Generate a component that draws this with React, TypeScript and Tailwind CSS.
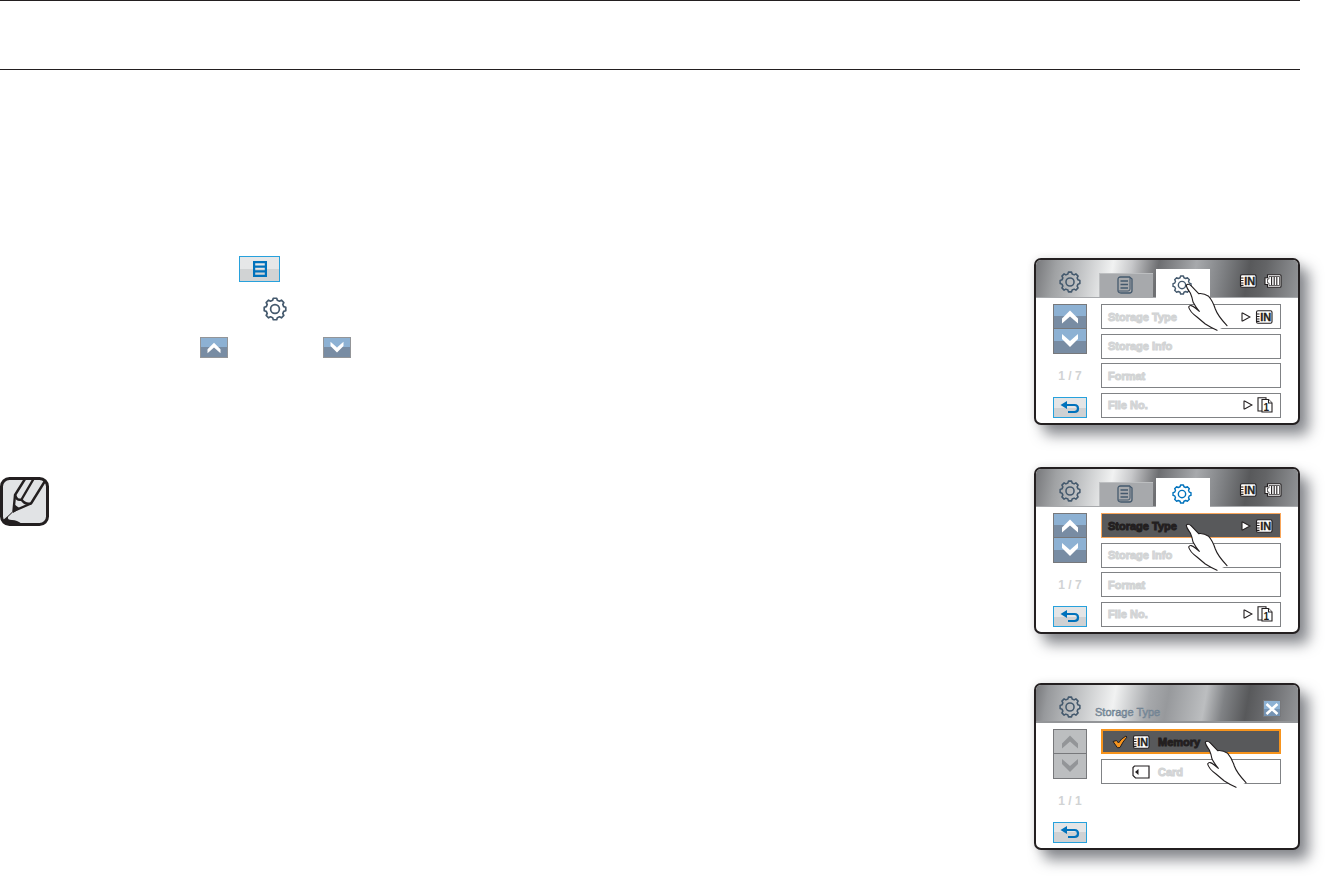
import React from "react";

const INK = "#231f20";
const SLATE = "#44596d";
const BLUE = "#0072bc";

function gearPath(cx: number, cy: number, outer: number, inner: number) {
  const points: string[] = [];
  for (let tooth = 0; tooth < 8; tooth++) {
    const base = tooth * 45;
    const corners: [number, number][] = [
      [-15, inner],
      [-9, outer],
      [9, outer],
      [15, inner],
    ];
    for (const [offset, radius] of corners) {
      const angle = ((base + offset) * Math.PI) / 180;
      points.push(
        `${(cx + radius * Math.sin(angle)).toFixed(2)} ${(cy - radius * Math.cos(angle)).toFixed(2)}`
      );
    }
  }
  return `M${points.join("L")}Z`;
}

const GEAR = gearPath(12, 12, 10.9, 9);

function Gear({ color, className }: { color: string; className: string }) {
  return (
    <svg viewBox="0 0 24 24" className={className} fill="none" stroke={color} strokeWidth="1.7" strokeLinejoin="round" aria-hidden="true">
      <path d={GEAR} />
      <circle cx="12" cy="12" r="4.4" />
    </svg>
  );
}

function ListIcon() {
  return (
    <svg viewBox="0 0 16 18" className="h-[18px] w-4" fill="none" stroke={SLATE} aria-hidden="true">
      <path d="M3.5 1H12.5L15 3V14.5Q15 17 12.5 17H4Q1 17 1 14.5V3.5Q1 1 3.5 1Z" strokeWidth="1.3" />
      <path d="M13 1.5V13Q13 15 11 15H1.5" strokeWidth="1" />
      <path d="M3.5 5H11M3.5 8.5H11M3.5 12H11" strokeWidth="1.5" />
    </svg>
  );
}

function MemoryIcon() {
  return (
    <svg viewBox="0 0 18 14" className="h-[14px] w-[18px] shrink-0" aria-hidden="true">
      <path d="M3 .8H15.5Q17 .8 17 2.3V11.7Q17 13.2 15.5 13.2H3Q1.5 13.2 1.5 11.7V2.3Q1.5 .8 3 .8Z" fill="#fff" stroke={INK} strokeWidth="1.1" />
      <path d="M1 4H4.5M1 6.5H4.5M1 9H4.5M1 11.3H4.5" stroke={INK} strokeWidth="1.2" />
      <text x="5.2" y="10.9" fontFamily="Liberation Sans, sans-serif" fontWeight="700" fontSize="11" fill={INK} stroke={INK} strokeWidth=".3">
        IN
      </text>
    </svg>
  );
}

function BatteryIcon() {
  return (
    <svg viewBox="0 0 18 14" className="h-[14px] w-[18px] shrink-0" aria-hidden="true">
      <path d="M3.5 .8H16Q17 .8 17 1.8V12.2Q17 13.2 16 13.2H3.500V10.500H1V3.800H3.500Z" fill="#fff" stroke={INK} strokeWidth="1.1" />
      <path d="M5 2.500H15.500V11.500H5V9H3.500V5H5Z" fill="none" stroke={INK} strokeWidth=".7" />
      <path d="M7.600 3V11M10.200 3V11M12.800 3V11" stroke={INK} strokeWidth="1.1" />
    </svg>
  );
}

function FilesIcon() {
  return (
    <svg viewBox="0 0 16 16" className="h-4 w-4 shrink-0" fill="#fff" stroke={INK} strokeWidth="1.1" aria-hidden="true">
      <path d="M5 14H1V.8H9V2.5" />
      <path d="M5 2.5H11.5L15 6V15H5Z" />
      <path d="M11.5 2.5V6H15" />
      <text x="6.500" y="13.500" fontFamily="Liberation Sans, sans-serif" fontWeight="700" fontSize="10" fill={INK} stroke="none">
        1
      </text>
    </svg>
  );
}

function CardIcon() {
  return (
    <svg viewBox="0 0 18 14" className="h-[14px] w-[18px] shrink-0" fill="#fff" stroke={INK} strokeWidth="1.2" aria-hidden="true">
      <path d="M2.5 1H17V13H3.5L1 10.5V2.5Z" />
      <path d="M6.500 4V10L3 7Z" fill={INK} stroke="none" />
    </svg>
  );
}

function Pointer() {
  return (
    <svg viewBox="0 0 10 10" className="h-[10px] w-[10px] shrink-0" aria-hidden="true">
      <path d="M1 1.3Q1 .8 1.6 1L9 5L1.6 9Q1 9.2 1 8.7Z" fill="#fff" stroke={INK} strokeWidth="1.1" />
    </svg>
  );
}

function Tick() {
  return (
    <svg viewBox="0 0 16 14" className="h-[14px] w-4 shrink-0" aria-hidden="true">
      <path d="M1 6.500L4.500 5.500L6.500 8Q9 3.500 14 1L15 2Q10.500 7 8 12.500L5.500 12.800Z" fill="#f7941d" stroke={INK} strokeWidth="1" strokeLinejoin="round" />
    </svg>
  );
}

function Chevron({ down, color = "#fff" }: { down?: boolean; color?: string }) {
  return (
    <svg viewBox="0 0 32 23" className="h-full w-full" fill={color} aria-hidden="true">
      <path d={down ? "M8 4.500L16 11.500L24 4.500V9.500L16 17.500L8 9.500Z" : "M8 13.500L16 5.500L24 13.500V18.500L16 11.500L8 18.500Z"} />
    </svg>
  );
}

function Hand() {
  return (
    <svg viewBox="0 0 132 144" className="h-12 w-11" aria-hidden="true">
      <path
        d="M4 7Q8 0 18 8L41 32Q56 30 71 40Q83 53 91 78Q98 98 126 128L96 142Q75 132 61 123L36 102Q14 86 11 72Q16 62 31 75L43 85Q32 72 24 57Q22 44 16 30Q5 15 4 7Z"
        fill="#fff"
      />
      <path
        d="M126 128Q98 98 91 78Q83 53 71 40Q56 30 41 32L18 8Q8 0 4 7Q5 15 16 30Q22 44 24 57Q32 72 43 85L31 75Q16 62 11 72Q14 86 36 102L61 123Q75 132 96 142"
        fill="none"
        stroke={INK}
        strokeWidth="3.4"
        strokeLinejoin="round"
        strokeLinecap="round"
      />
    </svg>
  );
}

function BackButton() {
  return (
    <button
      type="button"
      aria-label="Back"
      className="flex h-[21px] w-full items-center justify-center border border-[#27a1dc] bg-linear-to-b from-[#e4e5e6] from-50% to-[#cfd1d3] to-50%"
    >
      <svg viewBox="0 0 20 13" className="h-[13px] w-5" fill="none" aria-hidden="true">
        <path d="M6 4H14.500Q18 4 18 7.500Q18 11 14.500 11H8" stroke={BLUE} strokeWidth="2.200" />
        <path d="M.5 4L7 0V8Z" fill={BLUE} />
      </svg>
    </button>
  );
}

function Pager({ page, disabled }: { page: string; disabled?: boolean }) {
  const tone = disabled
    ? "border-[#77787b] bg-[#bcbec0]"
    : "border-[#77787b] bg-linear-to-b from-[#8db1d3] from-50% to-[#788ca3] to-50%";
  const mark = disabled ? "#939598" : "#fff";
  return (
    <div className="flex w-[34px] shrink-0 flex-col justify-between">
      <div>
        <button type="button" aria-label="Previous page" disabled={disabled} className={`block h-[25px] w-full border ${tone}`}>
          <Chevron color={mark} />
        </button>
        <button type="button" aria-label="Next page" disabled={disabled} className={`block h-[25px] w-full border border-t-0 ${tone}`}>
          <Chevron down color={mark} />
        </button>
      </div>
      <p className="text-center text-[12px] leading-3 font-bold whitespace-nowrap text-[#d1d3d4]">{page}</p>
      <BackButton />
    </div>
  );
}

const labelTone = {
  plain: "text-[#dcddde] [-webkit-text-stroke:1px_#d1d3d4]",
  active: "text-[#231f20] [-webkit-text-stroke:1px_#231f20]",
};

function Row({ label, active, children }: { label: string; active?: boolean; children?: React.ReactNode }) {
  return (
    <button
      type="button"
      className={`flex h-[25px] w-full items-center justify-between border pr-[7px] pl-[6px] ${
        active ? "border-[#f9a65a] bg-[#58595b]" : "border-[#808285] bg-white"
      }`}
    >
      <span className={`text-[11px] leading-3 font-bold ${active ? labelTone.active : labelTone.plain}`}>{label}</span>
      <span className="flex items-center gap-1">{children}</span>
    </button>
  );
}

function Screen({ header, children, hand }: { header: React.ReactNode; children: React.ReactNode; hand: string }) {
  return (
    <section className="relative h-[167px] rounded-[7px] border-2 border-[#231f20] bg-white shadow-[9px_10px_14px_rgba(60,64,72,0.6),0_0_8px_rgba(0,0,0,0.1)]">
      {header}
      <div className="flex h-[120px] gap-[14px] px-[17px] pt-[6px]">{children}</div>
      <div className={`pointer-events-none absolute ${hand}`}>
        <Hand />
      </div>
    </section>
  );
}

function TabHeader({ gear }: { gear: string }) {
  return (
    <header className="flex h-[38px] items-end rounded-t-[5px] border-b border-[#a7a9ac] bg-[linear-gradient(100deg,#77787b_0%,#a0a2a4_8%,#bcbec0_16%,#f1f2f2_29%,#c7c8ca_36%,#6d6e71_46%,#a7a9ac_60%,#808285_70%,#58595b_80%,#636466_86%,#939598_100%)] pr-[16px] pl-[23px]">
      <Gear color={SLATE} className="mb-[4px] h-[22px] w-[22px]" />
      <nav className="ml-[18px] flex items-end gap-[3px]" aria-label="Menu tabs">
        <button type="button" aria-label="Menu" className="flex h-6 w-[54px] items-center justify-center border-t border-l border-[#bcbec0] bg-[#a7a9ac] pr-[3px] pb-px">
          <ListIcon />
        </button>
        <button type="button" aria-label="Settings" className="-mb-px flex h-[29px] w-[54px] items-center justify-center bg-white pt-[3px] pr-[2px]">
          <Gear color={gear} className="h-5 w-5" />
        </button>
      </nav>
      <div className="mb-[9px] ml-auto flex items-center gap-[7px]">
        <MemoryIcon />
        <BatteryIcon />
      </div>
    </header>
  );
}

function SettingsScreen({ active, gear, hand }: { active?: boolean; gear: string; hand: string }) {
  return (
    <Screen header={<TabHeader gear={gear} />} hand={hand}>
      <Pager page="1 / 7" />
      <div className="flex flex-1 flex-col justify-between">
        <Row label="Storage Type" active={active}>
          <Pointer />
          <MemoryIcon />
        </Row>
        <Row label="Storage Info" />
        <Row label="Format" />
        <Row label="File No.">
          <Pointer />
          <FilesIcon />
        </Row>
      </div>
    </Screen>
  );
}

function StorageTypeScreen() {
  return (
    <Screen
      hand="top-[55px] left-[168px]"
      header={
        <header className="flex h-[38px] items-end rounded-t-[5px] border-b-2 border-[#939598] bg-[linear-gradient(100deg,#77787b_0%,#97999c_5%,#bcbec0_15%,#f1f2f2_30%,#a7a9ac_43%,#97999c_50%,#bcbec0_64%,#808285_71%,#58595b_80%,#6d6e71_88%,#939598_100%)] pr-[17px] pl-[23px]">
          <Gear color={SLATE} className="mb-[3px] h-[22px] w-[22px]" />
          <h2 className="mb-[3px] ml-[14px] text-[11px] leading-3 text-[#8c9aa7] [-webkit-text-stroke:0.5px_#6d7f90]">Storage Type</h2>
          <button
            type="button"
            aria-label="Close"
            className="mb-[4px] ml-auto flex h-[17px] w-[18px] items-center justify-center border border-[#77787b] bg-linear-to-b from-[#8db1d3] from-50% to-[#7593b3] to-50%"
          >
            <svg viewBox="0 0 14 12" className="h-3 w-[14px] shrink-0" stroke="#fff" strokeWidth="2.6" aria-hidden="true">
              <path d="M1.500 1L12.500 11M12.500 1L1.500 11" />
            </svg>
          </button>
        </header>
      }
    >
      <Pager page="1 / 1" disabled />
      <div className="flex flex-1 flex-col gap-[5px]">
        <button type="button" className="flex h-[25px] items-center border-2 border-[#f7941d] bg-[#58595b] pl-[9px]">
          <Tick />
          <span className="ml-[4px] flex">
            <MemoryIcon />
          </span>
          <span className={`ml-[8px] text-[11px] leading-3 font-bold ${labelTone.active}`}>Memory</span>
        </button>
        <button type="button" className="flex h-[25px] items-center border border-[#808285] bg-white pl-[30px]">
          <CardIcon />
          <span className={`ml-[8px] text-[11px] leading-3 font-bold ${labelTone.plain}`}>Card</span>
        </button>
      </div>
    </Screen>
  );
}

const arrowButton =
  "h-[21px] w-7 border border-[#939598] bg-linear-to-b from-[#8db1d3] from-50% to-[#788ca3] to-50%";

export default function App() {
  return (
    <div className="bg-white pr-[27px] pb-[26px] font-['Liberation_Sans',sans-serif]">
      <header className="h-[70px] border-y border-[#231f20]" />
      <main className="flex justify-between">
        <div className="flex flex-col items-start pt-[186px]">
          <button
            type="button"
            aria-label="Menu"
            className="ml-[239px] flex h-[26px] w-[41px] items-center justify-center border border-[#27a1dc] bg-linear-to-b from-[#e6e7e8] from-50% to-[#d1d3d4] to-50%"
          >
            <svg viewBox="0 0 14 16" className="h-4 w-[14px]" fill="none" stroke={BLUE} strokeWidth="2.200" aria-hidden="true">
              <path d="M1.100 1.100H12.900V14.900H1.100ZM1 5.700H13M1 10.300H13" />
            </svg>
          </button>
          <Gear color={SLATE} className="mt-[15px] ml-[263px] h-6 w-6" />
          <div className="mt-4 ml-[200px] flex gap-[95px]">
            <button type="button" aria-label="Up" className={arrowButton}>
              <Chevron />
            </button>
            <button type="button" aria-label="Down" className={arrowButton}>
              <Chevron down />
            </button>
          </div>
          <svg viewBox="0 0 49 49" className="mt-[119px] h-[49px] w-[49px]" role="img" aria-label="Note">
            <rect x="1.500" y="1.500" width="46" height="46" rx="8" fill="#e1e3e5" stroke={INK} strokeWidth="3" />
            <path d="M25 2L15 18L13.500 34L31 26.500L45 4" fill="none" stroke={INK} strokeWidth="2.400" strokeLinejoin="round" />
            <path d="M15 18Q17 24 21.500 22.500Q25 28 31 26.500M33.500 2L21.500 22.500" fill="none" stroke={INK} strokeWidth="2.400" />
            <path d="M14 27L13 36L20 31.500Q17 29.500 14 27Z" fill={INK} />
            <path d="M14 34Q11 37 8 40Q7 43 12 43Q17 43 22 47H8Q2 46 3 43Q7 40 13 34Z" fill={INK} />
          </svg>
        </div>
        <div className="w-[266px] shrink-0 pt-[188px]">
          <SettingsScreen gear={SLATE} hand="top-[23px] left-[149px]" />
          <div className="mt-[42px]">
            <SettingsScreen active gear={BLUE} hand="top-[54px] left-[149px]" />
          </div>
          <div className="mt-[49px]">
            <StorageTypeScreen />
          </div>
        </div>
      </main>
    </div>
  );
}
